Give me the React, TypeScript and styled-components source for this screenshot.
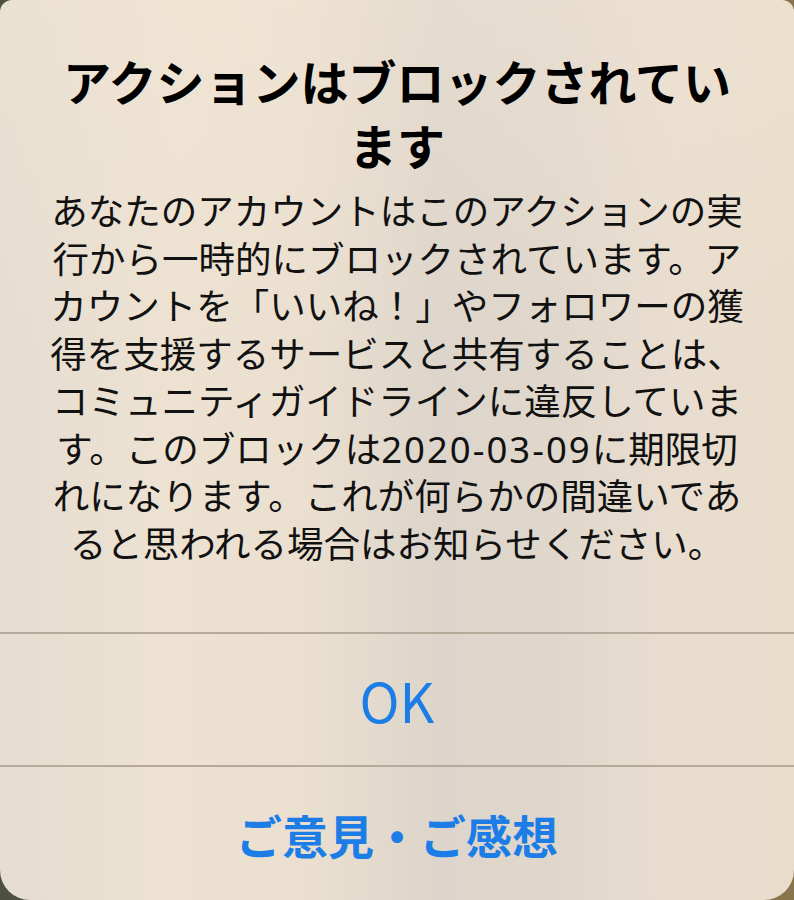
import styled, { createGlobalStyle } from "styled-components";

const GlobalStyle = createGlobalStyle`
  html, body {
    margin: 0;
    padding: 0;
    background: #5a5640;
  }
  * {
    box-sizing: border-box;
  }
`;

const Backdrop = styled.div`
  width: 794px;
  height: 900px;
  overflow: hidden;
  background: linear-gradient(90deg, #4e5140 0%, #6d6448 60%, #8a744c 100%);
`;

const Alert = styled.div`
  width: 794px;
  height: 900px;
  display: flex;
  flex-direction: column;
  border-radius: 12px 12px 30px 30px;
  background:
    linear-gradient(180deg, rgba(245, 232, 214, 0.35) 0%, rgba(240, 230, 216, 0) 40%),
    linear-gradient(
      90deg,
      #e5ddd1 0%,
      #ede2d2 22%,
      #ebe0d0 38%,
      #ddd5cb 55%,
      #e0d7cc 70%,
      #e8ddcf 85%,
      #e9dccb 100%
    );
  font-family: "Noto Sans CJK JP", "Noto Sans", sans-serif;
`;

const Content = styled.div`
  padding: 48px 20px 64px;
  text-align: center;
  color: #0a0a0a;
`;

const Title = styled.h1`
  margin: 0;
  font-size: 48px;
  line-height: 64px;
  font-weight: 700;
  color: #000;
`;

const Message = styled.p`
  margin: 12px 0 0;
  font-family: "Noto Sans", "Noto Sans CJK JP", sans-serif;
  font-size: 36.5px;
  line-height: 47.5px;
  font-weight: 400;
  color: #111;
`;

const Line = styled.span`
  display: block;
  white-space: nowrap;
`;

// the date in the reference is set in wider digits than Noto's
const DateText = styled.span`
  letter-spacing: 2px;
`;

const ActionButton = styled.button<{ $bold?: boolean; $size: number; $height: number }>`
  height: ${(p) => p.$height}px;
  display: flex;
  align-items: center;
  justify-content: center;
  border: 0;
  border-top: 2px solid #b6ab9a;
  background: transparent;
  padding: 0;
  font-family: "Noto Sans CJK JP", "Noto Sans", sans-serif;
  font-size: ${(p) => p.$size}px;
  font-weight: ${(p) => (p.$bold ? 700 : 400)};
  color: #1c7de6;
  cursor: pointer;
`;

const titleLines = ["アクションはブロックされてい", "ます"];

const App = (): JSX.Element => {
  return (
    <>
      <GlobalStyle />
      <Backdrop>
        <Alert>
          <Content>
            <Title>
              {titleLines.map((line) => (
                <Line key={line}>{line}</Line>
              ))}
            </Title>
            <Message>
              <Line>あなたのアカウントはこのアクションの実</Line>
              <Line>行から一時的にブロックされています。ア</Line>
              <Line>カウントを「いいね！」やフォロワーの獲</Line>
              <Line>得を支援するサービスと共有することは、</Line>
              <Line>コミュニティガイドラインに違反していま</Line>
              <Line>
                す。このブロックは<DateText>2020-03-09</DateText>に期限切
              </Line>
              <Line>れになります。これが何らかの間違いであ</Line>
              <Line>ると思われる場合はお知らせください。</Line>
            </Message>
          </Content>
          <ActionButton $size={54} $height={133}>
            OK
          </ActionButton>
          <ActionButton $bold $size={46} $height={135}>
            ご意見・ご感想
          </ActionButton>
        </Alert>
      </Backdrop>
    </>
  );
};

export default App;
